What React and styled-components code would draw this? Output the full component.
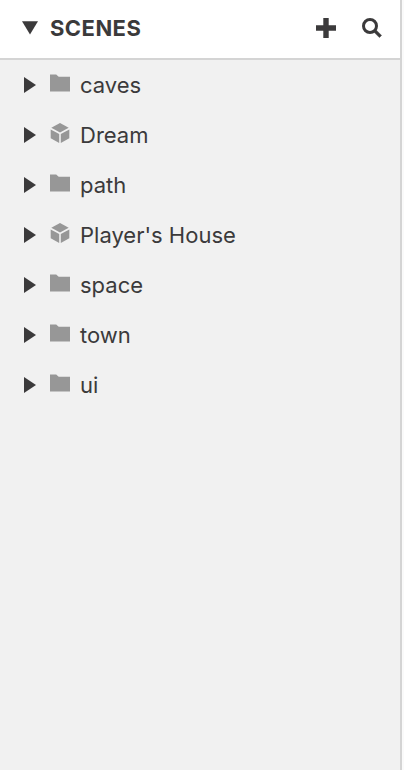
import React from "react";
import styled, { createGlobalStyle } from "styled-components";

const GlobalStyle = createGlobalStyle`
  * { box-sizing: border-box; }
  body { margin: 0; background: #fafafa; }
`;

const Sidebar = styled.aside`
  width: 402px;
  height: 770px;
  display: flex;
  flex-direction: column;
  background: #f1f1f1;
  border-right: 2px solid #d4d4d4;
  color: #3b3a3b;
  font-family: Inter, "Liberation Sans", sans-serif;
  overflow: hidden;
`;

const Header = styled.header`
  height: 60px;
  flex: none;
  display: flex;
  align-items: center;
  padding: 0 18px 2px 22px;
  background: #fff;
  border-bottom: 2px solid #d4d4d4;
`;

const Title = styled.h2`
  flex: 1;
  margin: 0 0 0 12px;
  font-size: 22px;
  line-height: 28px;
  font-weight: 700;
  letter-spacing: 0.45px;
`;

const HeaderButton = styled.button`
  display: flex;
  margin: 0 0 0 26px;
  padding: 0;
  border: 0;
  background: none;
  color: inherit;
`;

const SceneList = styled.ul`
  margin: 0;
  padding: 0;
  list-style: none;
`;

const SceneRow = styled.li`
  height: 50px;
  display: flex;
  align-items: center;
  padding-left: 24px;
`;

const Label = styled.span`
  margin-left: 10px;
  font-size: 22px;
  line-height: 28px;
  white-space: nowrap;
`;

const Icon = styled.svg`
  display: block;
  flex: none;
  fill: currentColor;
`;

const ItemIcon = styled(Icon)`
  margin: 0 0 2px 14px;
  color: #979797;
`;

const Folder = () => (
  <ItemIcon width="20" height="22" viewBox="0 0 20 22">
    <path d="M0 1.4H6.2L8.7 3.8H20V18.4H0Z" />
  </ItemIcon>
);

const Cube = () => (
  <ItemIcon width="20" height="22" viewBox="0 0 20 22">
    <path d="M10 0L18.7 4.8L10 9.6L1.3 4.8Z" />
    <path d="M.7 6.4L9.2 11V20L.7 15.3Z" />
    <path d="M19.3 6.4L10.8 11V20L19.3 15.3Z" />
  </ItemIcon>
);

const scenes = [
  { name: "caves", type: "folder" },
  { name: "Dream", type: "scene" },
  { name: "path", type: "folder" },
  { name: "Player's House", type: "scene" },
  { name: "space", type: "folder" },
  { name: "town", type: "folder" },
  { name: "ui", type: "folder" },
];

export default function App() {
  return (
    <>
      <GlobalStyle />
      <Sidebar>
        <Header>
          <Icon width="16" height="14" viewBox="0 0 16 14">
            <path d="M0 .3H16L8 13.6Z" />
          </Icon>
          <Title>SCENES</Title>
          <HeaderButton aria-label="Add scene">
            <Icon width="20" height="20" viewBox="0 0 20 20">
              <path d="M7.3 0H12.7V7.3H20V12.7H12.7V20H7.3V12.7H0V7.3H7.3Z" />
            </Icon>
          </HeaderButton>
          <HeaderButton aria-label="Search scenes">
            <Icon width="20" height="20" viewBox="0 0 20 20">
              <circle cx="8" cy="8" r="6.5" fill="none" stroke="currentColor" strokeWidth="3" />
              <path d="M11.4 13.6L13.6 11.4L19.6 17.4L17.4 19.6Z" stroke="currentColor" strokeWidth=".4" />
            </Icon>
          </HeaderButton>
        </Header>
        <SceneList>
          {scenes.map((scene) => (
            <SceneRow key={scene.name}>
              <Icon width="12" height="16" viewBox="0 0 12 16">
                <path d="M0 0L12 8L0 16Z" />
              </Icon>
              {scene.type === "folder" ? <Folder /> : <Cube />}
              <Label>{scene.name}</Label>
            </SceneRow>
          ))}
        </SceneList>
      </Sidebar>
    </>
  );
}
